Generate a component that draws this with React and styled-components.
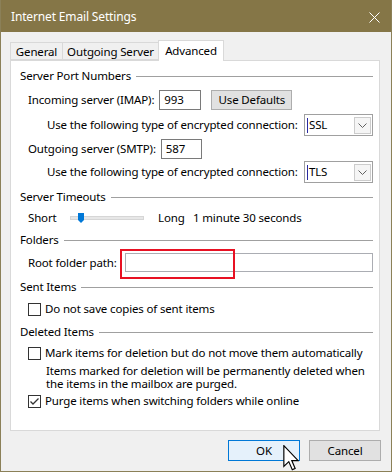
import React from 'react';
import styled, { createGlobalStyle } from 'styled-components';

const GlobalStyle = createGlobalStyle`
  html, body {
    margin: 0;
    padding: 0;
    background: #f0f0f0;
  }
  * {
    box-sizing: border-box;
  }
`;

const Window = styled.div`
  position: relative;
  width: 392px;
  height: 472px;
  display: flex;
  flex-direction: column;
  background: #f0f0f0;
  border: 1px solid #8b8058;
  border-top: none;
  font-family: "Segoe UI", "Noto Sans", sans-serif;
  font-size: 11.5px;
  letter-spacing: -0.15px;
  color: #000;
  overflow: hidden;
`;

const TitleBar = styled.div`
  height: 32px;
  flex-shrink: 0;
  display: flex;
  align-items: center;
  justify-content: space-between;
  padding: 0 12px 0 11px;
  margin: 0 -1px;
  background: #857647;
  color: #fff;
  font-size: 12px;
`;

const CloseIcon = styled.svg`
  width: 11px;
  height: 11px;
  margin-top: 2px;
`;

const Body = styled.div`
  flex: 1;
  display: flex;
  flex-direction: column;
  padding: 8px 10px 0 9px;
`;

const TabStrip = styled.div`
  display: flex;
  align-items: flex-start;
  height: 20px;
  position: relative;
  z-index: 1;
`;

const Tab = styled.div`
  width: ${p => p.$w}px;
  height: ${p => (p.$active ? 21 : 18)}px;
  margin-top: ${p => (p.$active ? 0 : 2)}px;
  margin-left: ${p => (p.$first ? 0 : -1)}px;
  display: flex;
  align-items: center;
  justify-content: center;
  border: 1px solid #d9d9d9;
  border-bottom: ${p => (p.$active ? 'none' : '1px solid #d9d9d9')};
  background: ${p => (p.$active ? '#fff' : '#f0f0f0')};
  line-height: 16px;
  padding-top: ${p => (p.$active ? 0 : 1)}px;
  white-space: nowrap;
`;

const Panel = styled.div`
  width: 370px;
  height: 371px;
  display: flex;
  flex-direction: column;
  background: #fff;
  border: 1px solid #d9d9d9;
  padding: 0 6px 0 9px;
`;

const GroupHeader = styled.div`
  display: flex;
  align-items: center;
  gap: 5px;
  height: 16px;
  line-height: 16px;
  margin-top: ${p => p.$mt}px;
  white-space: nowrap;

  &::after {
    content: '';
    flex: 1;
    height: 1px;
    background: #a0a0a0;
    margin-top: 1px;
  }
`;

const Row = styled.div`
  position: relative;
  display: flex;
  align-items: center;
  height: ${p => p.$h}px;
  margin-top: ${p => p.$mt}px;
  padding-left: ${p => p.$indent}px;
  white-space: nowrap;
`;

const Label = styled.span`
  line-height: 16px;
  width: ${p => (p.$w ? `${p.$w}px` : 'auto')};
  margin-left: ${p => p.$ml || 0}px;
  flex-shrink: 0;
`;

const TextBox = styled.div`
  position: relative;
  height: ${p => p.$h || 20}px;
  width: ${p => (p.$w ? `${p.$w}px` : 'auto')};
  flex: ${p => (p.$w ? 'none' : 1)};
  margin-left: ${p => p.$ml}px;
  border: 1px solid ${p => (p.$light ? '#abadb3' : '#7a7a7a')};
  background: #fff;
  padding-left: 4px;
  line-height: 17px;
`;

const PushButton = styled.button`
  width: ${p => p.$w}px;
  height: ${p => p.$h}px;
  margin-left: ${p => p.$ml || 0}px;
  padding: 0;
  font-family: inherit;
  font-size: 11.5px;
  letter-spacing: -0.15px;
  color: #000;
  background: ${p => (p.$default ? '#e5f1fb' : '#e1e1e1')};
  border: 1px solid ${p => (p.$default ? '#0078d7' : '#adadad')};
  border-radius: 0;
  line-height: 16px;
`;

const Combo = styled.div`
  margin-left: auto;
  width: 69px;
  height: 22px;
  display: flex;
  align-items: center;
  border: 1px solid #a0a0a0;
  background: #fff;
  padding: 0 1px 0 2px;
`;

const ComboText = styled.span`
  flex: 1;
  display: flex;
  align-items: center;
  line-height: 16px;

  &::before {
    content: '';
    width: 1px;
    height: 15px;
    background: #2a2aa0;
    margin-right: 1px;
  }
`;

const ComboArrow = styled.div`
  width: 17px;
  height: 17px;
  display: flex;
  align-items: center;
  justify-content: center;
  border: 1px solid #cccccc;
  background: #f5f5f5;
`;

const SliderTrack = styled.div`
  position: relative;
  width: 74px;
  height: 4px;
  background: #e7e7e7;
  border: 1px solid #d6d6d6;
  flex-shrink: 0;
`;

const SliderThumb = styled.svg`
  position: absolute;
  left: 7px;
  top: -4px;
  width: 6px;
  height: 10px;
`;

const HighlightBox = styled.div`
  position: absolute;
  left: -6px;
  top: -5px;
  width: 115px;
  height: 30px;
  border: 2px solid #e81123;
  pointer-events: none;
`;

const CheckBox = styled.div`
  width: 13px;
  height: 13px;
  flex-shrink: 0;
  border: 1px solid #333;
  background: #fff;
  margin-right: 4px;
  display: flex;
  align-items: center;
  justify-content: center;
`;

const Note = styled.div`
  margin-top: ${p => p.$mt}px;
  padding-left: ${p => p.$indent}px;
  line-height: 13px;
  white-space: nowrap;
`;

const ButtonBar = styled.div`
  display: flex;
  justify-content: flex-end;
  gap: 9px;
  margin-top: 9px;
`;

const Cursor = styled.svg`
  position: absolute;
  left: 282px;
  top: 445px;
  width: 16px;
  height: 26px;
  pointer-events: none;
`;

const Chevron = () => (
  <svg width="9" height="5" viewBox="0 0 9 5">
    <path d="M0.5 0.5 L4.5 4.5 L8.5 0.5" fill="none" stroke="#606060" strokeWidth="1" />
  </svg>
);

const Check = ({ checked, children, mt }) => (
  <Row $h={16} $mt={mt} $indent={8}>
    <CheckBox>
      {checked && (
        <svg width="11" height="11" viewBox="0 0 11 11">
          <path d="M1.5 5.5 L4 8 L9.5 2.5" fill="none" stroke="#333" strokeWidth="1.3" />
        </svg>
      )}
    </CheckBox>
    <Label>{children}</Label>
  </Row>
);

export default function App() {
  return (
    <>
      <GlobalStyle />
      <Window>
        <TitleBar>
          <span>Internet Email Settings</span>
          <CloseIcon viewBox="0 0 11 11">
            <path d="M0.5 0.5 L10.5 10.5 M10.5 0.5 L0.5 10.5" stroke="#fff" strokeWidth="1" />
          </CloseIcon>
        </TitleBar>

        <Body>
          <TabStrip>
            <Tab $w={53} $first>General</Tab>
            <Tab $w={97}>Outgoing Server</Tab>
            <Tab $w={66} $active>Advanced</Tab>
          </TabStrip>

          <Panel>
            <GroupHeader $mt={7}>Server Port Numbers</GroupHeader>
            <Row $h={20} $mt={6} $indent={8}>
              <Label>Incoming server (IMAP):</Label>
              <TextBox $w={42} $ml={5}>993</TextBox>
              <PushButton $w={81} $h={20} $ml={10}>Use Defaults</PushButton>
            </Row>
            <Row $h={22} $mt={4} $indent={27}>
              <Label>Use the following type of encrypted connection:</Label>
              <Combo>
                <ComboText>SSL</ComboText>
                <ComboArrow><Chevron /></ComboArrow>
              </Combo>
            </Row>
            <Row $h={20} $mt={3} $indent={8}>
              <Label>Outgoing server (SMTP):</Label>
              <TextBox $w={41} $ml={5}>587</TextBox>
            </Row>
            <Row $h={22} $mt={2} $indent={27}>
              <Label>Use the following type of encrypted connection:</Label>
              <Combo>
                <ComboText>TLS</ComboText>
                <ComboArrow><Chevron /></ComboArrow>
              </Combo>
            </Row>

            <GroupHeader $mt={6}>Server Timeouts</GroupHeader>
            <Row $h={16} $mt={5} $indent={8}>
              <Label $w={42}>Short</Label>
              <SliderTrack>
                <SliderThumb viewBox="0 0 6 10">
                  <path d="M0 0 H6 V7 L3 10 L0 7 Z" fill="#0078d7" />
                </SliderThumb>
              </SliderTrack>
              <Label $ml={14} $w={35}>Long</Label>
              <Label>1 minute 30 seconds</Label>
            </Row>

            <GroupHeader $mt={6}>Folders</GroupHeader>
            <Row $h={19} $mt={5} $indent={8}>
              <Label>Root folder path:</Label>
              <TextBox $h={19} $ml={8} $light>
                <HighlightBox />
              </TextBox>
            </Row>

            <GroupHeader $mt={7}>Sent Items</GroupHeader>
            <Check mt={6}>Do not save copies of sent items</Check>

            <GroupHeader $mt={7}>Deleted Items</GroupHeader>
            <Check mt={5}>Mark items for deletion but do not move them automatically</Check>
            <Note $mt={3} $indent={26}>
              Items marked for deletion will be permanently deleted when
              <br />
              the items in the mailbox are purged.
            </Note>
            <Check mt={3} checked>Purge items when switching folders while online</Check>
          </Panel>

          <ButtonBar>
            <PushButton $w={72} $h={21} $default>OK</PushButton>
            <PushButton $w={72} $h={21}>Cancel</PushButton>
          </ButtonBar>
        </Body>

        <Cursor viewBox="0 0 12 20">
          <path
            d="M0.5 0.5 L0.5 16.5 L4.3 12.8 L7 19 L9.2 18 L6.6 12 L11.5 12 Z"
            fill="#fff"
            stroke="#000"
            strokeWidth="0.9"
            strokeLinejoin="miter"
          />
        </Cursor>
      </Window>
    </>
  );
}
